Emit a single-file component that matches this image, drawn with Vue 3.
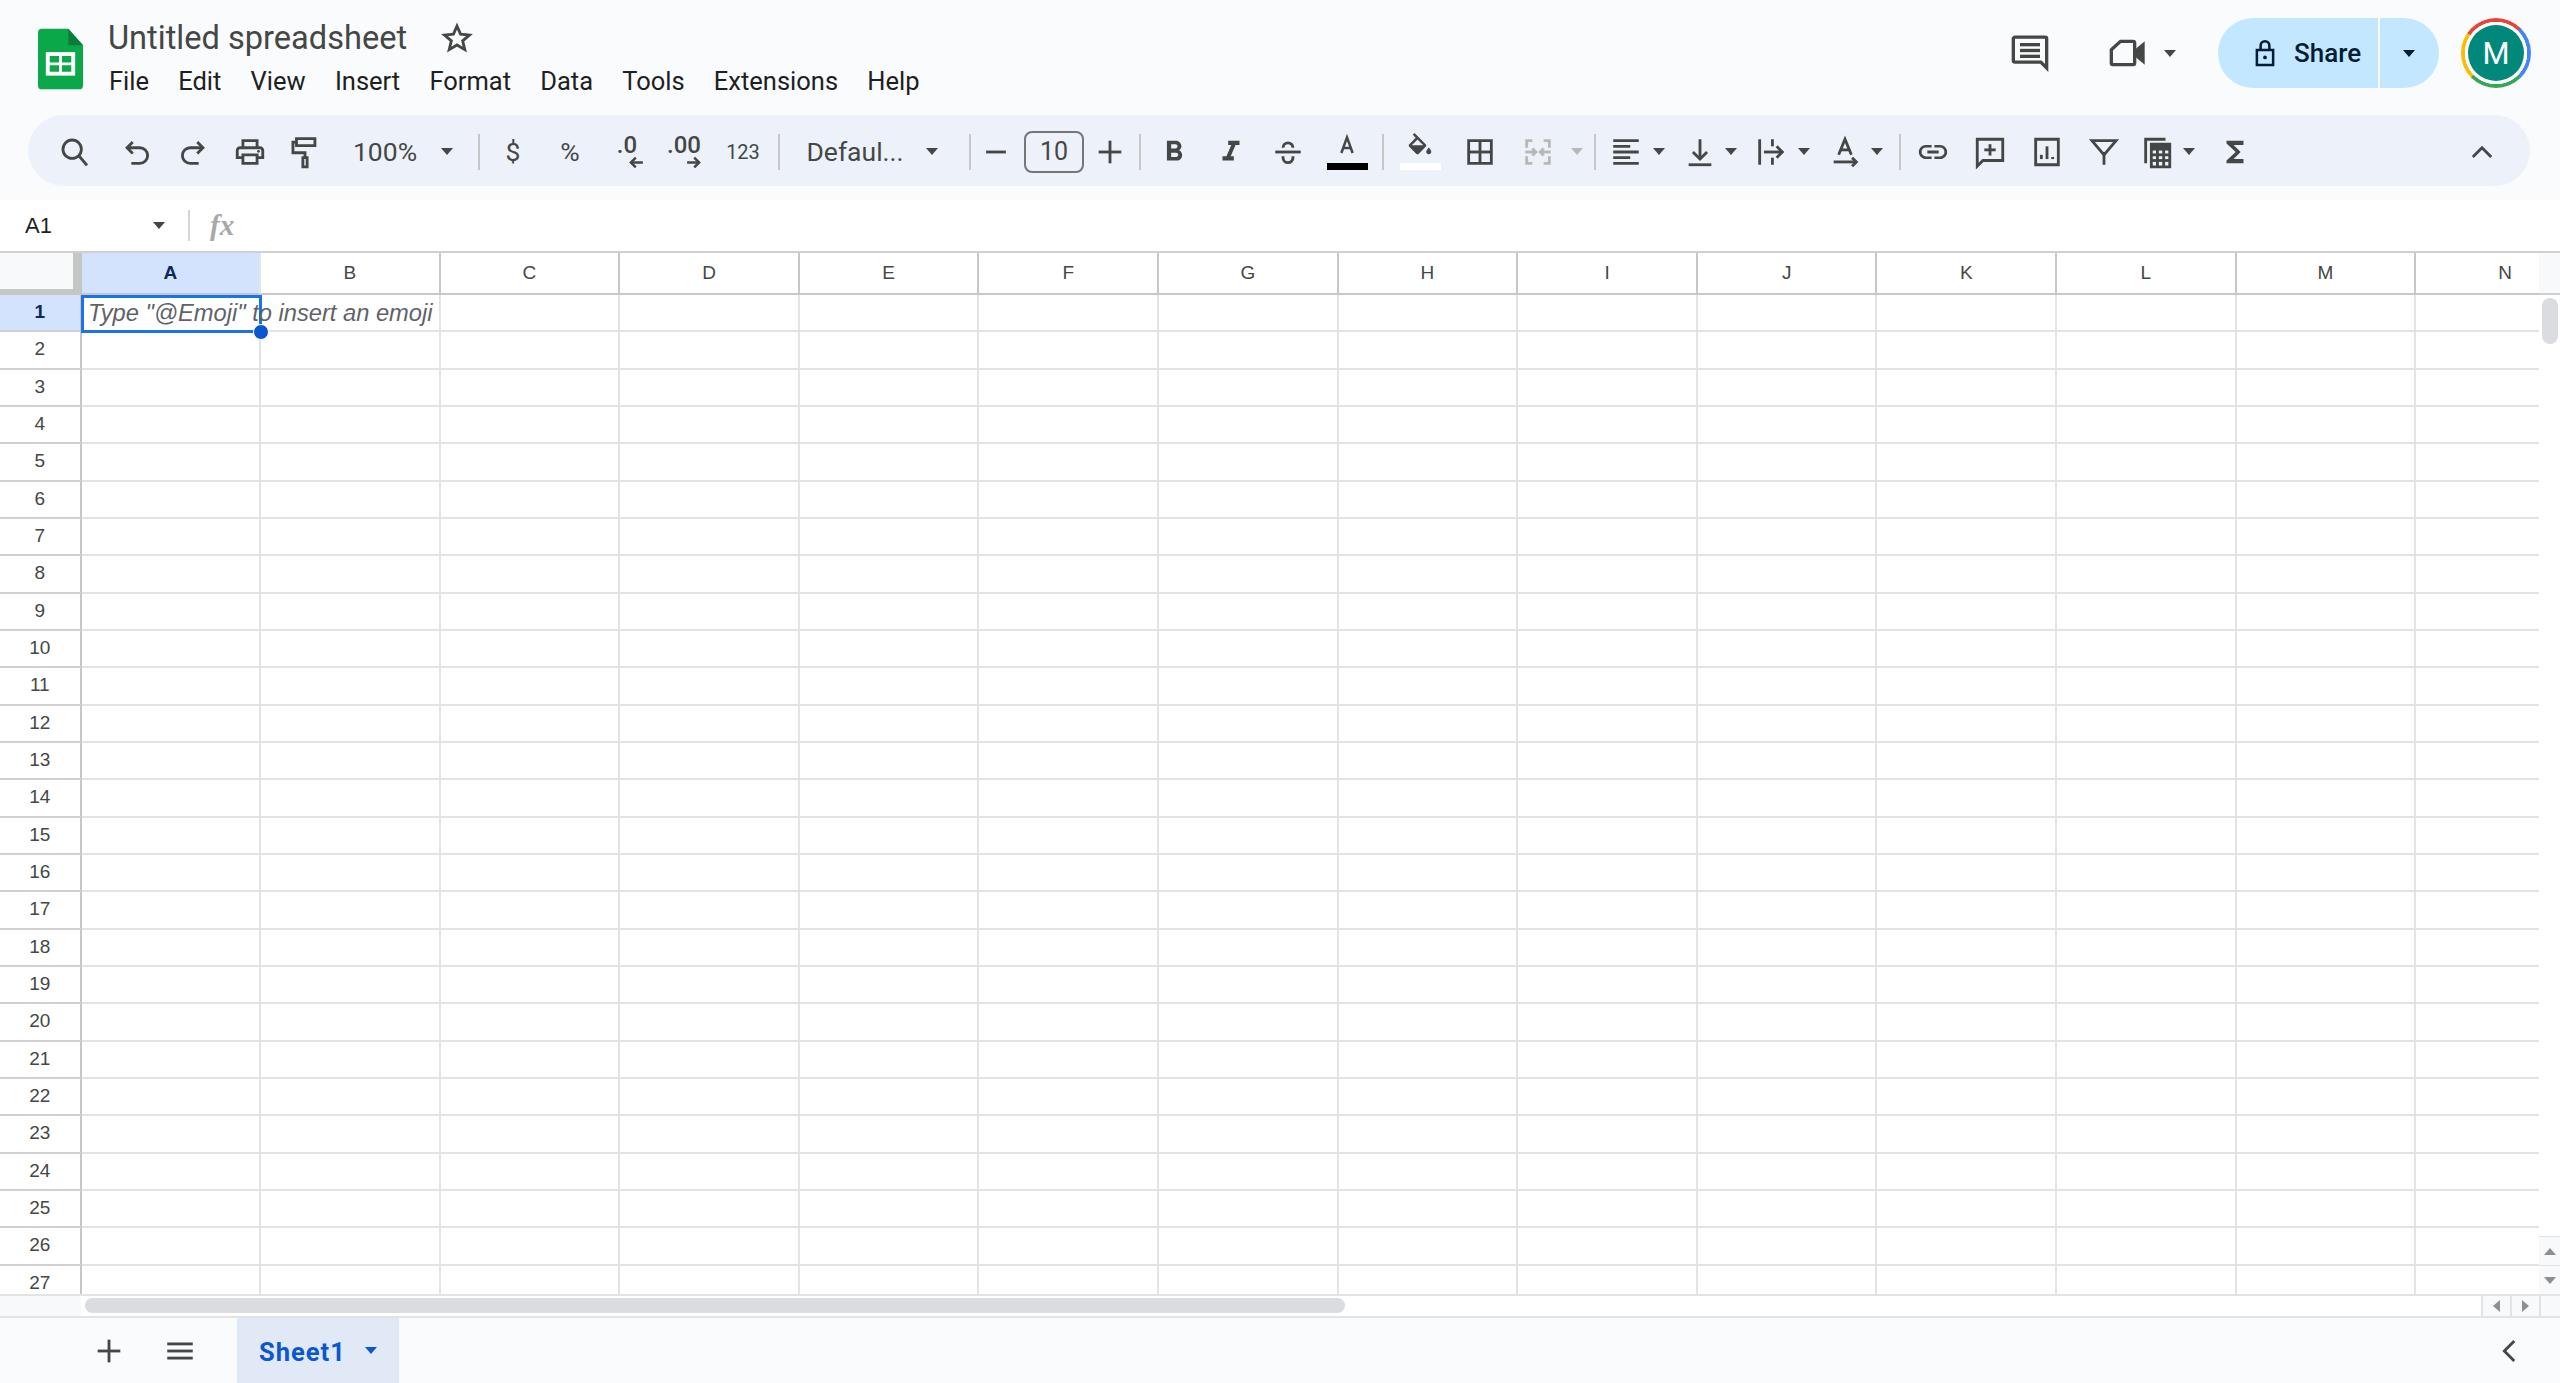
<script setup>
import { h, computed } from 'vue'

const icons = {
  search: { s: ['M15 15l5.500 6.500', 'M10 3.500a6.500 6.500 0 1 0 0 13a6.500 6.500 0 1 0 0-13z'] },
  undo: { s: ['M9 5L5 9l4 4', 'M5 9h9a5.500 5.500 0 0 1 0 11H8'] },
  redo: { s: ['M15 5l4 4-4 4', 'M19 9h-9a5.500 5.500 0 0 0 0 11h6'] },
  print: { f: ['M19 8h-1V3H6v5H5c-1.66 0-3 1.34-3 3v6h4v4h12v-4h4v-6c0-1.66-1.34-3-3-3zM8 5h8v3H8V5zm8 14H8v-4h8v4zm2-4v-2H6v2H4v-4c0-.55.45-1 1-1h14c.55 0 1 .45 1 1v4h-2z', 'M18 10.500a1 1 0 1 0 0 2a1 1 0 1 0 0-2z'] },
  paint: { s: ['M6 2.500h13v5H6z', 'M6 5H3.500v7.500H12V16', 'M10.500 16h3v6.500h-3z'] },
  minus: { s: ['M5 12h14'] },
  plus: { s: ['M12 4v16', 'M4 12h16'] },
  bold: { f: ['M15.600 10.790c.97-.67 1.650-1.770 1.650-2.790 0-2.260-1.750-4-4-4H7v14h7.040c2.090 0 3.710-1.700 3.710-3.790 0-1.520-.86-2.820-2.150-3.420zM10 6.500h3c.83 0 1.500.67 1.500 1.500s-.67 1.500-1.500 1.500h-3v-3zm3.500 9H10v-3h3.500c.83 0 1.500.67 1.500 1.500s-.67 1.500-1.500 1.500z'] },
  italic: { f: ['M10 4v3h2.210l-3.420 8H6v3h8v-3h-2.210l3.420-8H18V4z'] },
  strike: { s: ['M3 12h18', 'M8.500 9a3.500 3.500 0 0 1 7 0', 'M8.500 15v1a3.500 3.500 0 0 0 7 0v-1'] },
  textA: { s: ['M7.500 16L12 3.500L16.500 16', 'M9 12h6'] },
  fill: { f: ['M16.560 8.940L7.620 0 6.210 1.410l2.380 2.380-5.150 5.150c-.59.59-.59 1.540 0 2.120l5.500 5.500c.29.29.68.44 1.060.44s.77-.15 1.060-.44l5.500-5.500c.59-.58.59-1.530 0-2.120zM5.210 10L10 5.210 14.790 10H5.210z', 'M19 11.500s-2 2.170-2 3.500c0 1.100.9 2 2 2s2-.9 2-2c0-1.330-2-3.500-2-3.500z', 'M4 10h12l-6 6z'] },
  borders: { s: ['M4 4h16v16H4z', 'M12 4v16', 'M4 12h16'] },
  merge: { s: ['M4 9V4h4', 'M16 4h4v5', 'M4 15v5h4', 'M16 20h4v-5', 'M3 12h7', 'M8 9.500l2.500 2.500-2.500 2.500', 'M21 12h-7', 'M16 9.500L13.500 12l2.500 2.500'] },
  align: { f: ['M15 15H3v2h12v-2zm0-8H3v2h12V7zM3 13h18v-2H3v2zm0 8h18v-2H3v2zM3 3v2h18V3H3z'] },
  valign: { s: ['M12 3v14', 'M7 12l5 5 5-5', 'M4 21h16'] },
  wrap: { s: ['M4 3v18', 'M13 3v5', 'M13 16v5', 'M7 12h13', 'M16 8l4 4-4 4'] },
  rotate: { s: ['M7.500 14L12 3l4.500 11', 'M9 10.500h6', 'M4 19h16', 'M17 16l3 3-3 3'] },
  link: { f: ['M3.900 12c0-1.710 1.390-3.100 3.100-3.100h4V7H7c-2.760 0-5 2.240-5 5s2.240 5 5 5h4v-1.900H7c-1.710 0-3.100-1.390-3.100-3.100zM8 13h8v-2H8v2zm9-6h-4v1.900h4c1.710 0 3.100 1.390 3.100 3.100s-1.390 3.100-3.100 3.100h-4V17h4c2.760 0 5-2.240 5-5s-2.240-5-5-5z'] },
  addComment: { s: ['M3 3h18v15H7l-4 4z', 'M12 6.500v8', 'M8 10.500h8'] },
  chart: { s: ['M4 3h16v18H4z', 'M8 17v-3', 'M12 17V8', 'M16 17v-1.500'] },
  filter: { s: ['M3.500 4h17L12 14z', 'M12 12v9'] },
  table: { s: ['M4 20V3h14', 'M8 6.500h13v16H8z', 'M8 14h13', 'M8 18h13', 'M12.300 10v12', 'M16.700 10v12'], f: ['M8 6.500h13V11H8z'] },
  sigma: { f: ['M18 4H6v2l6.500 6L6 18v2h12v-3h-7l5-5-5-5h7z'] },
  up: { s: ['M5.500 15.500L12 9l6.500 6.500'] },
  star: { s: ['M12 3.500l2.500 5.800 6.300.6-4.800 4.100 1.500 6.200-5.500-3.300-5.500 3.300 1.500-6.200-4.800-4.100 6.300-.6z'] },
  comment: { s: ['M3 2.500h18a1 1 0 0 1 1 1V21l-3.500-3.500H3a1 1 0 0 1-1-1v-13a1 1 0 0 1 1-1z', 'M6 7h12', 'M6 10.500h12', 'M6 14h12'] },
  camera: { s: ['M7.500 5H15a1 1 0 0 1 1 1v12a1 1 0 0 1-1 1H3a1 1 0 0 1-1-1v-8z'], f: ['M16 10l6-5v14l-6-5z'] },
  lock: { s: ['M5.500 9.500h13v12h-13z', 'M8.500 9.500V6a3.500 3.500 0 0 1 7 0v3.500'], f: ['M12 14a1.500 1.500 0 1 0 0 3a1.500 1.500 0 1 0 0-3z'] },
  back: { s: ['M15 5l-7 7 7 7'] },
  menu: { f: ['M3 6h18v2H3z', 'M3 11h18v2H3z', 'M3 16h18v2H3z'] },
  arrowL: { s: ['M21 12H5', 'M11 5l-7 7 7 7'] },
  arrowR: { s: ['M3 12h16', 'M13 5l7 7-7 7'] }
}

const Icon = (props) => {
  const def = icons[props.name]
  const sw = props.name === 'arrowL' || props.name === 'arrowR' ? 3.5 : 2
  return h('svg', { viewBox: '0 0 24 24', class: 'ic' }, [
    ...(def.f || []).map((d) => h('path', { d, fill: 'currentColor' })),
    ...(def.s || []).map((d) => h('path', { d, fill: 'none', stroke: 'currentColor', 'stroke-width': sw }))
  ])
}
Icon.props = ['name']

const menus = ['File', 'Edit', 'View', 'Insert', 'Format', 'Data', 'Tools', 'Extensions', 'Help']

const raw = [
  { k: 'icon', n: 'search', c: 75 }, { k: 'icon', n: 'undo', c: 137 }, { k: 'icon', n: 'redo', c: 193 },
  { k: 'icon', n: 'print', c: 250 }, { k: 'icon', n: 'paint', c: 305 },
  { k: 'text', t: '100%', c: 385, w: 80 }, { k: 'caret', c: 447 }, { k: 'sep', c: 479 },
  { k: 'text', t: '$', c: 513, w: 30 }, { k: 'text', t: '%', c: 570, w: 30 },
  { k: 'dec', t: '.0', a: 'arrowL', c: 627, w: 40 }, { k: 'dec', t: '.00', a: 'arrowR', c: 684, w: 40 },
  { k: 'small', t: '123', c: 743, w: 40 }, { k: 'sep', c: 779 },
  { k: 'text', t: 'Defaul...', c: 855, w: 110 }, { k: 'caret', c: 932 }, { k: 'sep', c: 970 },
  { k: 'icon', n: 'minus', c: 996 }, { k: 'box', t: '10', c: 1054, w: 60 }, { k: 'icon', n: 'plus', c: 1110 }, { k: 'sep', c: 1140 },
  { k: 'icon', n: 'bold', c: 1174 }, { k: 'icon', n: 'italic', c: 1231 }, { k: 'icon', n: 'strike', c: 1288 },
  { k: 'bar', n: 'textA', c: 1347, w: 41, color: '#000' }, { k: 'sep', c: 1383 },
  { k: 'bar', n: 'fill', c: 1420, w: 41, color: '#fff' }, { k: 'icon', n: 'borders', c: 1480 },
  { k: 'icon', n: 'merge', c: 1538, off: true }, { k: 'caret', c: 1577, off: true }, { k: 'sep', c: 1595 },
  { k: 'icon', n: 'align', c: 1626 }, { k: 'caret', c: 1659 }, { k: 'icon', n: 'valign', c: 1700 }, { k: 'caret', c: 1731 },
  { k: 'icon', n: 'wrap', c: 1771 }, { k: 'caret', c: 1804 }, { k: 'icon', n: 'rotate', c: 1845 }, { k: 'caret', c: 1877 }, { k: 'sep', c: 1900 },
  { k: 'icon', n: 'link', c: 1933 }, { k: 'icon', n: 'addComment', c: 1990 }, { k: 'icon', n: 'chart', c: 2047 },
  { k: 'icon', n: 'filter', c: 2104 }, { k: 'icon', n: 'table', c: 2157 }, { k: 'caret', c: 2189 }, { k: 'icon', n: 'sigma', c: 2235 }
]
const defaultW = { icon: 34, caret: 12, sep: 2 }
const tools = computed(() => {
  let right = 46
  return raw.map((it) => {
    const w = it.w || defaultW[it.k]
    const gap = it.c - w / 2 - right
    right = it.c + w / 2
    return { ...it, width: w, gap }
  })
})

const cols = 'ABCDEFGHIJKLMN'.split('')
const rows = Array.from({ length: 27 }, (_, i) => i + 1)
</script>

<template>
  <div class="app">
    <header class="top">
      <svg class="logo" viewBox="0 0 46 62">
        <path d="M4 0h27l15 17v41a4 4 0 0 1-4 4H4a4 4 0 0 1-4-4V4a4 4 0 0 1 4-4z" fill="#0ba84a" />
        <path d="M31 0l15 17H31z" fill="#0a7d3a" />
        <path d="M8 24h30v24H8z" fill="#fff" />
        <path d="M12 28h9.500v6.500H12zM24.500 28H34v6.500h-9.500zM12 37.500h9.500V44H12zM24.500 37.500H34V44h-9.500z" fill="#0ba84a" />
      </svg>
      <div class="docinfo">
        <div class="titlerow">
          <span class="title">Untitled spreadsheet</span>
          <Icon name="star" class="star" />
        </div>
        <nav class="menus"><span v-for="m in menus" :key="m">{{ m }}</span></nav>
      </div>
      <div class="actions">
        <Icon name="comment" class="act-comment" />
        <Icon name="camera" class="act-camera" />
        <i class="caret act-caret"></i>
        <div class="share">
          <div class="share-main"><Icon name="lock" class="lock" /><span>Share</span></div>
          <div class="share-drop"><i class="caret dark"></i></div>
        </div>
        <div class="avatar"><div class="avatar-in">M</div></div>
      </div>
    </header>

    <div class="toolbar">
      <template v-for="(t, i) in tools" :key="i">
        <div class="tool" :class="{ off: t.off }" :style="{ width: t.width + 'px', marginLeft: t.gap + 'px' }">
          <Icon v-if="t.k === 'icon'" :name="t.n" />
          <i v-else-if="t.k === 'caret'" class="caret"></i>
          <i v-else-if="t.k === 'sep'" class="sep"></i>
          <span v-else-if="t.k === 'text'" class="tool-text">{{ t.t }}</span>
          <span v-else-if="t.k === 'small'" class="tool-small">{{ t.t }}</span>
          <div v-else-if="t.k === 'dec'" class="dec">
            <span>{{ t.t }}</span>
            <Icon :name="t.a" class="dec-arrow" />
          </div>
          <div v-else-if="t.k === 'box'" class="sizebox">{{ t.t }}</div>
          <div v-else-if="t.k === 'bar'" class="barred">
            <Icon :name="t.n" class="bar-ic" />
            <i class="colorbar" :style="{ background: t.color }"></i>
          </div>
        </div>
      </template>
      <div class="collapse"><Icon name="up" /></div>
    </div>

    <div class="formula">
      <span class="namebox">A1</span>
      <i class="caret"></i>
      <i class="fsep"></i>
      <span class="fx">fx</span>
    </div>

    <main class="sheet">
      <div class="sheet-main">
        <div class="grid">
          <div class="corner"><div class="corner-in"></div></div>
          <div v-for="c in cols" :key="c" class="colh" :class="{ active: c === 'A' }">{{ c }}</div>
          <template v-for="r in rows" :key="r">
            <div class="rowh" :class="{ active: r === 1 }">{{ r }}</div>
            <div v-for="c in cols" :key="c" class="cell"></div>
          </template>
          <div class="selection"><span class="hint">Type "@Emoji" to insert an emoji</span><i class="handle"></i></div>
        </div>
        <div class="vscroll">
          <div class="vhead"></div>
          <div class="vtrack"><div class="vthumb"></div></div>
          <div class="vbtn"><i class="tri up"></i></div>
          <div class="vbtn"><i class="tri down"></i></div>
        </div>
      </div>
      <div class="hscroll">
        <div class="hleft"></div>
        <div class="htrack"><div class="hthumb"></div></div>
        <div class="hbtn"><i class="tri left"></i></div>
        <div class="hbtn"><i class="tri right"></i></div>
        <div class="hcorner"></div>
      </div>
    </main>

    <footer class="tabs">
      <Icon name="plus" class="tab-add" />
      <Icon name="menu" class="tab-menu" />
      <div class="tab"><span>Sheet1</span><i class="caret blue"></i></div>
      <Icon name="back" class="tab-back" />
    </footer>
  </div>
</template>

<style>
html, body { margin: 0; overflow: hidden; background: #f9fbfd; }
</style>

<style scoped>
.app {
  width: 2560px; height: 1383px; display: flex; flex-direction: column; overflow: hidden;
  background: #f9fbfd; font-family: Roboto, "Liberation Sans", sans-serif; color: #444746;
}
.ic { width: 34px; height: 34px; display: block; flex: none; color: #444746; }
.caret {
  display: block; flex: none; width: 0; height: 0;
  border-left: 6.500px solid transparent; border-right: 6.500px solid transparent; border-top: 7.500px solid #444746;
}
.caret.dark { border-top-color: #001d35; }
.caret.blue { border-top-color: #0b57d0; }

.top { height: 115px; flex: none; display: flex; align-items: flex-start; padding-left: 38px; box-sizing: border-box; }
.logo { width: 45px; height: 62px; margin-top: 28px; flex: none; }
.docinfo { margin-left: 25px; margin-top: 17px; }
.titlerow { display: flex; align-items: center; height: 42px; }
.title { font-size: 32.600px; line-height: 42px; color: #444746; }
.star { width: 34px; height: 34px; margin-left: 33px; }
.menus { display: flex; gap: 29.200px; margin-top: 2px; font-size: 25.500px; line-height: 40px; color: #1f1f1f; margin-left: 1px; }

.actions { margin-left: auto; display: flex; align-items: center; height: 70px; margin-top: 18px; padding-right: 29px; }
.act-comment { width: 40px; height: 40px; }
.act-camera { width: 40px; height: 40px; margin-left: 58px; }
.act-caret { margin-left: 16px; }
.share { display: flex; margin-left: 42px; height: 70px; }
.share-main {
  width: 160px; background: #c2e7ff; border-radius: 35px 0 0 35px; display: flex; align-items: center;
  padding-left: 32px; box-sizing: border-box; font-size: 26px; font-weight: 500; color: #001d35;
}
.lock { width: 30px; height: 34px; color: #001d35; margin-right: 14px; }
.share-drop {
  width: 59px; background: #c2e7ff; border-radius: 0 35px 35px 0; margin-left: 2px; display: flex;
  align-items: center; justify-content: center; padding-right: 2px; box-sizing: border-box;
}
.avatar {
  width: 70px; height: 70px; margin-left: 22px; border-radius: 50%; box-sizing: border-box; padding: 7px;
  background:
    radial-gradient(circle, #fff 0 31px, transparent 31.500px),
    conic-gradient(from 45deg, #4285f4 0 90deg, #34a853 90deg 180deg, #fbbc04 180deg 260deg, #ea4335 260deg 360deg);
}
.avatar-in {
  width: 56px; height: 56px; border-radius: 50%; background: #00897b; color: #fff; font-size: 31px;
  display: flex; align-items: center; justify-content: center;
}

.toolbar {
  flex: none; height: 71px; margin: 0 30px 0 28px; background: #edf2fa; border-radius: 36px;
  display: flex; align-items: center; padding-left: 18px; box-sizing: border-box;
}
.tool { flex: none; display: flex; align-items: center; justify-content: center; height: 100%; padding-top: 2px; box-sizing: border-box; }
.tool.off .ic { color: #b8b8b8; }
.tool.off .caret { border-top-color: #b8b8b8; }
.sep { display: block; width: 2px; height: 36px; background: #c7c7c7; }
.tool-text { font-size: 26.500px; white-space: nowrap; }
.tool-small { font-size: 20px; }
.dec { display: flex; flex-direction: column; align-items: center; font-size: 24px; font-weight: 500; line-height: 22px; padding-top: 2px; }
.dec-arrow { width: 17px; height: 17px; margin-left: 18px; margin-top: -2px; }
.sizebox {
  width: 60px; height: 42px; border: 2px solid #747775; border-radius: 8px; box-sizing: border-box;
  display: flex; align-items: center; justify-content: center; font-size: 25px;
}
.barred { display: flex; flex-direction: column; align-items: center; }
.bar-ic { width: 30px; height: 30px; }
.colorbar { display: block; width: 41px; height: 7px; }
.collapse { margin-left: auto; margin-right: 31px; padding-top: 2px; }

.formula { flex: none; height: 51px; margin-top: 14px; background: #fff; display: flex; align-items: center; }
.namebox { font-family: "Liberation Sans", sans-serif; font-size: 22px; color: #1f1f1f; margin-left: 25px; width: 128px; }
.fsep { display: block; width: 2px; height: 31px; background: #d5d5d5; margin-left: 23px; }
.fx {
  font-family: "Liberation Serif", serif; font-style: italic; font-weight: 700; font-size: 29px; color: #a8a8a8;
  margin-left: 20px;
}

.sheet { flex: 1; min-height: 0; display: flex; flex-direction: column; background: #fff; border-top: 2px solid #d0d0d0; }
.sheet-main { flex: 1; min-height: 0; display: flex; overflow: hidden; }
.grid {
  width: 2539px; flex: none; overflow: hidden; position: relative; display: grid; align-content: start;
  grid-template-columns: 81.500px repeat(14, 179.600px); grid-template-rows: 42px repeat(27, 37.330px);
}
.corner { background: #c4c7c5; }
.corner-in { width: 73px; height: 36px; background: #f8f9fa; }
.colh {
  display: flex; align-items: center; justify-content: center; font-family: "Liberation Sans", sans-serif; font-size: 19px;
  border-right: 2px solid #c7c7c7; border-bottom: 2px solid #c7c7c7; box-sizing: border-box; color: #444746; padding-bottom: 1px;
}
.colh.active { background: #d3e3fd; color: #0b2a5c; font-weight: 700; border-right-color: #e0e6ef; }
.rowh {
  display: flex; align-items: center; justify-content: center; font-family: "Liberation Sans", sans-serif; font-size: 19px;
  border-right: 2px solid #c7c7c7; border-bottom: 2px solid #d0d0d0; box-sizing: border-box; padding-bottom: 1px;
}
.rowh.active { background: #d3e3fd; color: #0b2a5c; font-weight: 700; }
.cell { border-right: 2px solid #e3e3e3; border-bottom: 2px solid #e3e3e3; box-sizing: border-box; }
.selection {
  position: absolute; left: 81px; top: 42px; width: 181px; height: 38px; box-sizing: border-box;
  border: 3px solid #1a73e8; display: flex; align-items: center; white-space: nowrap;
}
.hint {
  font-family: "Liberation Sans", sans-serif; font-style: italic; font-size: 23.700px; color: #5f6368; margin-left: 4px; margin-top: -1px;
}
.handle {
  position: absolute; right: -10px; bottom: -10px; width: 14px; height: 14px; border-radius: 50%;
  background: #0b57d0; border: 1px solid #fff;
}
.vscroll { flex: 1; display: flex; flex-direction: column; }
.vhead { height: 40px; flex: none; background: #f8f9fa; border-bottom: 2px solid #d0d0d0; }
.vtrack { flex: 1; }
.vthumb { width: 16px; height: 46px; margin: 3px 0 0 3px; border-radius: 8px; background: #dadce0; }
.vbtn {
  flex: none; height: 29px; display: flex; align-items: center; justify-content: center; background: #f8f9fa;
  border-top: 1px solid #e3e3e3; box-sizing: border-box;
}
.tri { display: block; width: 0; height: 0; border: 6px solid transparent; }
.tri.up { border-bottom: 7px solid #8f8f8f; border-top: 0; }
.tri.down { border-top: 7px solid #8f8f8f; border-bottom: 0; }
.tri.left { border-right: 7px solid #8f8f8f; border-left: 0; }
.tri.right { border-left: 7px solid #8f8f8f; border-right: 0; }
.hscroll { flex: none; height: 24px; display: flex; border-top: 2px solid #e3e3e3; border-bottom: 2px solid #e3e3e3; box-sizing: border-box; }
.hleft { width: 81px; flex: none; background: #f8f9fa; }
.htrack { flex: 1; }
.hthumb { width: 1260px; height: 15px; margin: 2px 0 0 4px; border-radius: 8px; background: #dadce0; }
.hbtn {
  width: 29px; flex: none; display: flex; align-items: center; justify-content: center; background: #f8f9fa;
  border-left: 2px solid #e3e3e3; box-sizing: border-box;
}
.hcorner { width: 21px; flex: none; background: #f8f9fa; border-left: 2px solid #e3e3e3; box-sizing: border-box; }

.tabs { flex: none; height: 65px; display: flex; align-items: center; }
.tab-add { margin-left: 92px; width: 34px; height: 34px; }
.tab-menu { margin-left: 37px; width: 34px; height: 34px; }
.tab {
  margin-left: 40px; width: 162px; height: 100%; background: #e1e9f7; display: flex; align-items: center;
  color: #0b57d0; font-size: 25.500px; font-weight: 700; letter-spacing: 1px; padding-left: 22px; box-sizing: border-box; gap: 19px;
}
.tab span { margin-top: 2px; }
.tab-back { margin-left: auto; margin-right: 33px; width: 34px; height: 34px; }
</style>
